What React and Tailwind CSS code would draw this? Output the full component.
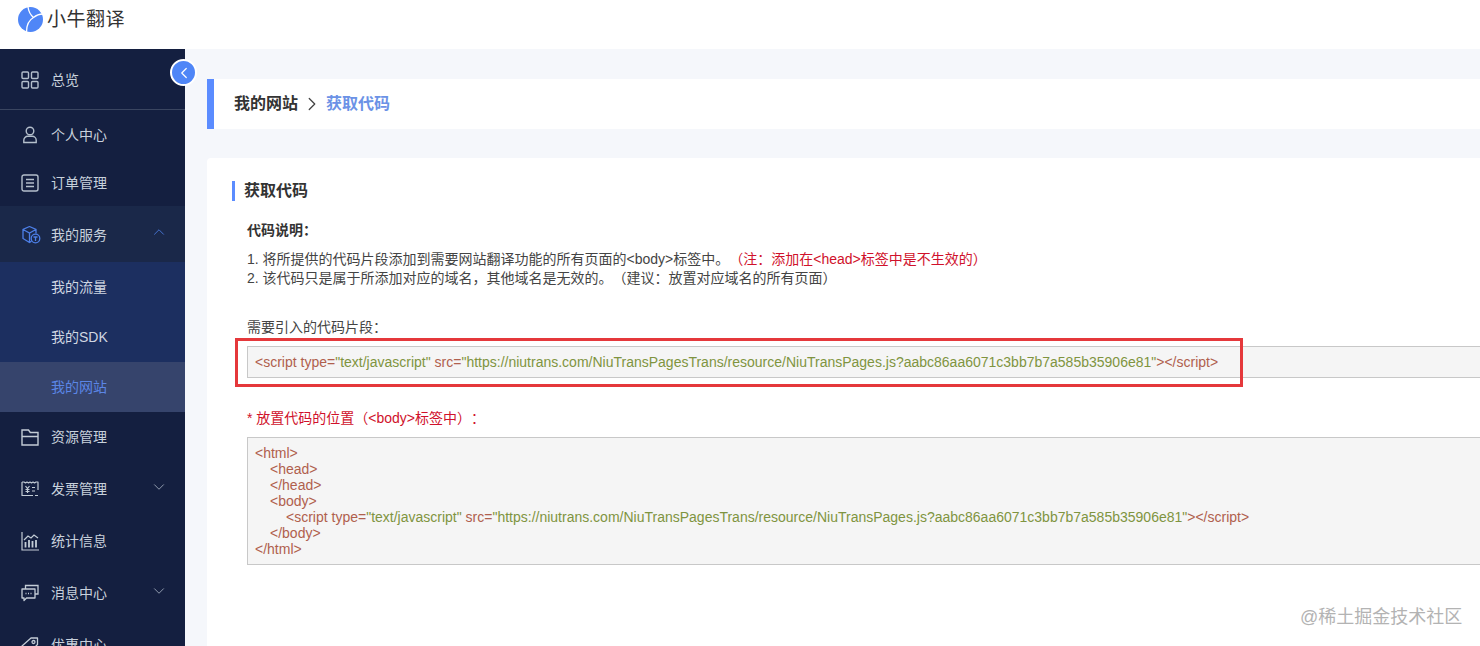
import { ChevronDown, ChevronLeft, ChevronRight, ChevronUp } from 'lucide-react';

const cjk = "font-['Liberation_Sans','Noto_Sans_CJK_SC',sans-serif]";

function GridIcon() {
  return (
    <svg width="18" height="18" viewBox="0 0 18 18" fill="none" stroke="#b4bfcc" strokeWidth="1.4">
      <rect x="1" y="1" width="6.5" height="6.5" rx="1" />
      <rect x="10.5" y="1" width="6.5" height="6.5" rx="1" />
      <rect x="1" y="10.5" width="6.5" height="6.5" rx="1" />
      <rect x="10.5" y="10.5" width="6.5" height="6.5" rx="1" />
    </svg>
  );
}

function UserIcon() {
  return (
    <svg width="18" height="18" viewBox="0 0 18 18" fill="none" stroke="#b4bfcc" strokeWidth="1.4">
      <circle cx="9" cy="5" r="3.8" />
      <path d="M2.8 16.5v-2.2a4 4 0 0 1 4-4h4.4a4 4 0 0 1 4 4v2.2z" />
    </svg>
  );
}

function OrderIcon() {
  return (
    <svg width="18" height="18" viewBox="0 0 18 18" fill="none" stroke="#b4bfcc" strokeWidth="1.4">
      <rect x="1" y="1" width="16" height="16" rx="2" />
      <path d="M5 5.5h8M5 9h8M5 12.500h8" />
    </svg>
  );
}

function BoxIcon() {
  return (
    <svg width="20" height="20" viewBox="0 0 20 20" fill="none" stroke="#4d7fe8" strokeWidth="1.3">
      <path d="M8.500 1.500 15 4.500v4M8.500 1.500 2 4.500v9l6.500 4 2-1.200M2 4.500l6.500 3.500L15 4.500M8.500 8v9.500" />
      <circle cx="14.500" cy="13.500" r="4.300" />
      <path d="M12.500 12h4M14.500 12v4" />
    </svg>
  );
}

function FolderIcon() {
  return (
    <svg width="18" height="18" viewBox="0 0 18 18" fill="none" stroke="#c3ccd6" strokeWidth="1.4">
      <path d="M1 2h6.500l1.800 2.500H17V17H1zM1 8.500h16" />
    </svg>
  );
}

function InvoiceIcon() {
  return (
    <svg width="18" height="18" viewBox="0 0 18 18" fill="none" stroke="#c3ccd6" strokeWidth="1.2">
      <path d="M1 2h2l1.500 1L6 2l1.500 1L9 2l1.500 1L12 2l1.500 1L15 2h2v8M1 2v13.500h11" strokeLinejoin="round" />
      <path d="M4.500 6 6.500 8.500 8.500 6M6.500 8.500V13M4.500 9.500h4M4.500 11.500h4M11 7.500h3M11 11h3M14 15.500h3" />
    </svg>
  );
}

function ChartIcon() {
  return (
    <svg width="18" height="19" viewBox="0 0 18 19" fill="none" stroke="#c3ccd6" strokeWidth="1.2">
      <path d="M1 0v18h17M3 8l4-4 3 2 3-3 4 3" />
      <path d="M4.500 15.500V10M8 15.500V8M11.500 15.500V9M15 15.500V8" strokeWidth="1.800" />
    </svg>
  );
}

function MessageIcon() {
  return (
    <svg width="18" height="18" viewBox="0 0 18 18" fill="none" stroke="#c3ccd6" strokeWidth="1.300">
      <path d="M4.500 5V1.500h12.500V10h-3" />
      <path d="M1 5h13v9H5.500L3 16.500V14H1z" strokeLinejoin="round" />
      <path d="M4.500 9.500h1M7 9.500h1M9.500 9.500h1" />
    </svg>
  );
}

function TagIcon() {
  return (
    <svg width="18" height="18" viewBox="0 0 18 18" fill="none" stroke="#c3ccd6" strokeWidth="1.300">
      <path d="M1 10 10 2h6.500v6.500L8 17z" strokeLinejoin="round" />
      <circle cx="12.500" cy="6" r="1.500" />
    </svg>
  );
}

function MenuRow({ icon, label, rowClass, chevron }) {
  return (
    <div className={`relative flex items-center pl-[21px] text-sm text-[#c8d1dc] ${rowClass}`}>
      <span className="flex w-[30px] shrink-0">{icon}</span>
      <span>{label}</span>
      {chevron === 'down' && <ChevronDown size={18} strokeWidth={1.1} className="absolute left-[150px] top-[calc(50%-11px)] text-[#a9b4c4]" />}
      {chevron === 'up' && <ChevronUp size={18} strokeWidth={1.1} className="absolute left-[150px] top-[calc(50%-11px)] text-[#4d7fe8]" />}
    </div>
  );
}

function SubRow({ label, active }) {
  return (
    <div className={`flex h-[50px] items-center pl-[51px] text-sm ${active ? 'bg-[#36446c] text-[#5b86e6]' : 'text-[#d0d7e2]'}`}>
      {label}
    </div>
  );
}

function Sidebar() {
  return (
    <aside className="relative h-[597px] w-[185px] shrink-0 overflow-hidden bg-[#141f40]">
      <div className="h-[61px] border-b border-[#3a4560]">
        <MenuRow icon={<GridIcon />} label="总览" rowClass="h-[61px]" />
      </div>
      <MenuRow icon={<UserIcon />} label="个人中心" rowClass="h-[50px]" />
      <MenuRow icon={<OrderIcon />} label="订单管理" rowClass="h-[46px]" />
      <MenuRow icon={<BoxIcon />} label="我的服务" rowClass="h-[56px] pt-[2px] bg-[#1a2849]" chevron="up" />
      <div className="bg-[#1c2f60]">
        <SubRow label="我的流量" />
        <SubRow label="我的SDK" />
        <SubRow label="我的网站" active />
      </div>
      <MenuRow icon={<FolderIcon />} label="资源管理" rowClass="h-[50px]" />
      <MenuRow icon={<InvoiceIcon />} label="发票管理" rowClass="h-[54px]" chevron="down" />
      <MenuRow icon={<ChartIcon />} label="统计信息" rowClass="h-[50px]" />
      <MenuRow icon={<MessageIcon />} label="消息中心" rowClass="h-[54px]" chevron="down" />
      <MenuRow icon={<TagIcon />} label="优惠中心" rowClass="h-[50px]" />
    </aside>
  );
}

function Tag({ children }) {
  return <span className="text-[#b0604d]">{children}</span>;
}

function Str({ children }) {
  return <span className="text-[#7f9440]">{children}</span>;
}

function ScriptLine() {
  return (
    <>
      <Tag>&lt;script </Tag>
      <Tag>type=</Tag>
      <Str>"text/javascript"</Str>
      <Tag> src=</Tag>
      <Str>"https://niutrans.com/NiuTransPagesTrans/resource/NiuTransPages.js?aabc86aa6071c3bb7b7a585b35906e81"</Str>
      <Tag>&gt;&lt;/script&gt;</Tag>
    </>
  );
}

export default function App() {
  return (
    <div className={`relative h-[646px] w-[1480px] overflow-hidden bg-white ${cjk}`}>
      {/* top bar with logo */}
      <header className="flex h-[49px] items-start bg-white pl-[18px] pt-[7px]">
        <svg width="25" height="25" viewBox="0 0 25 25">
          <circle cx="12.500" cy="12.500" r="12.500" fill="#4f86f7" />
          <path d="M10 0c0.500 4 2 7.500 5.500 10.500 3-2.500 6-3.500 9.500-3.500M15.500 10.500C11 13 8.500 18 8.500 25" fill="none" stroke="#fff" strokeWidth="1.300" />
        </svg>
        <span className="ml-[4px] mt-[-2px] text-[19px] leading-[29px] font-normal tracking-[0.5px] text-[#333]">小牛翻译</span>
      </header>

      <div className="flex">
        <Sidebar />

        <main className="h-[597px] grow overflow-hidden bg-[#f5f7fb] pl-[22px] pt-[30px]">
          {/* breadcrumb */}
          <div className="flex h-[50px] items-center border-l-[7px] border-[#5b8cff] bg-white pl-[20px] text-base font-bold">
            <span className="text-[#333]">我的网站</span>
            <ChevronRight size={22} strokeWidth={1.4} className="mx-[3px] text-[#444]" />
            <span className="text-[#6b92e6]">获取代码</span>
          </div>

          <section className="mt-[29px] h-[500px] rounded-tl bg-white pl-[25px] pt-[23px]">
            <h2 className="border-l-[3px] border-[#5b8cff] pl-[10px] text-base leading-[20px] font-bold text-[#333] indent-[-1px]">获取代码</h2>

            <div className="pl-[15px] [text-spacing-trim:space-all]">
              <p className="mt-[19px] text-sm leading-[20px] font-bold text-[#333]">代码说明：</p>
              <p className="mt-[10px] text-sm leading-[19px] text-[#444]">
                1. 将所提供的代码片段添加到需要网站翻译功能的所有页面的&lt;body&gt;标签中。
                <span className="text-[#d0112b]">（注：添加在&lt;head&gt;标签中是不生效的）</span>
              </p>
              <p className="text-sm leading-[19px] text-[#444]">
                2. 该代码只是属于所添加对应的域名，其他域名是无效的。（建议：放置对应域名的所有页面）
              </p>

              <p className="mt-[29px] text-sm leading-[20px] text-[#444]">需要引入的代码片段：</p>
              <div className="mt-[9px] flex h-[32px] items-center border border-r-0 border-[#c8c8c8] bg-[#f5f5f5] pl-[7px] text-sm whitespace-pre">
                <ScriptLine />
              </div>

              <p className="mt-[30px] text-sm leading-[20px] text-[#d0112b]">* 放置代码的位置（&lt;body&gt;标签中）：</p>
              <div className="mt-[9px] h-[128px] border border-r-0 border-[#c8c8c8] bg-[#f5f5f5] pl-[7px] pt-[7px] text-sm leading-[16px] whitespace-pre">
                <div><Tag>&lt;html&gt;</Tag></div>
                <div className="pl-[15px]"><Tag>&lt;head&gt;</Tag></div>
                <div className="pl-[15px]"><Tag>&lt;/head&gt;</Tag></div>
                <div className="pl-[15px]"><Tag>&lt;body&gt;</Tag></div>
                <div className="pl-[31px]"><ScriptLine /></div>
                <div className="pl-[15px]"><Tag>&lt;/body&gt;</Tag></div>
                <div><Tag>&lt;/html&gt;</Tag></div>
              </div>
            </div>
          </section>
        </main>
      </div>

      {/* sidebar collapse button */}
      <div className="absolute left-[170px] top-[59px] flex h-[27px] w-[27px] items-center justify-center rounded-full border-2 border-white bg-[#4f86f7]">
        <ChevronLeft size={18} strokeWidth={1.6} className="text-white" />
      </div>

      {/* red annotation box */}
      <div className="absolute left-[235px] top-[338px] h-[49px] w-[1008px] border-[3px] border-[#e5383b]" />

      {/* watermark */}
      <div className="absolute left-[1300px] top-[605px] text-lg leading-[24px] text-[#b3b3b3]">@稀土掘金技术社区</div>
    </div>
  );
}
